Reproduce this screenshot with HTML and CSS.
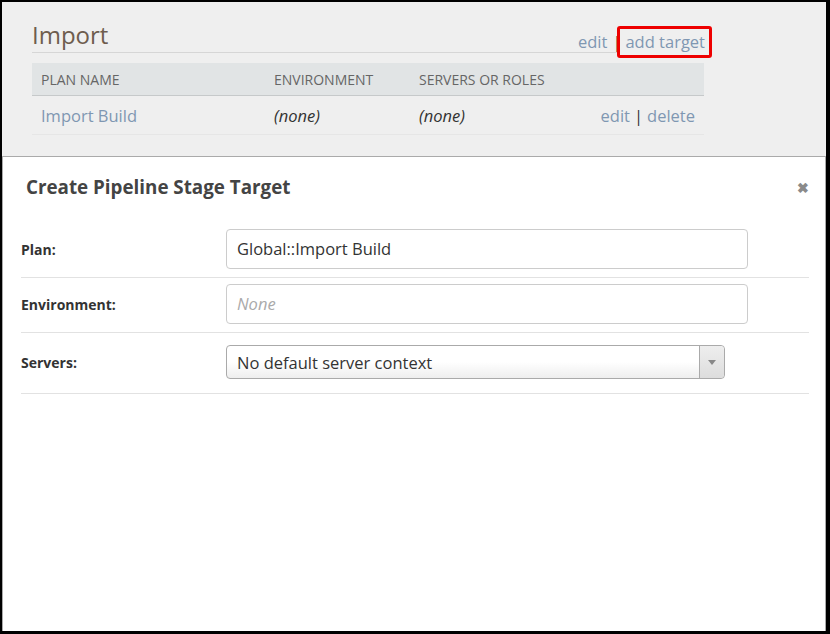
FILE: index.html
```html
<!DOCTYPE html>
<html>
<head>
<meta charset="utf-8">
<link rel="stylesheet" href="styles.css">
</head>
<body>
<div class="frame">
  <section class="stage">
    <div class="stage-head">
      <h2 class="stage-title">Import</h2>
      <div class="stage-actions">
        <a class="lnk">edit</a><span class="sep">|</span><a class="lnk add-target">add target</a>
      </div>
    </div>
    <table class="targets">
      <thead>
        <tr><th class="c1">Plan Name</th><th class="c2">Environment</th><th class="c3">Servers or Roles</th><th class="c4"></th></tr>
      </thead>
      <tbody>
        <tr>
          <td class="c1"><a class="lnk">Import Build</a></td>
          <td class="c2"><em>(none)</em></td>
          <td class="c3"><em>(none)</em></td>
          <td class="c4"><a class="lnk">edit</a><span class="bar">|</span><a class="lnk">delete</a></td>
        </tr>
      </tbody>
    </table>
  </section>
  <div class="modal">
    <div class="modal-head">
      <h3 class="modal-title">Create Pipeline Stage Target</h3>
      <span class="close">&#x2716;</span>
    </div>
    <div class="form">
      <div class="row">
        <label class="lbl">Plan:</label>
        <div class="input">Global::Import Build</div>
      </div>
      <div class="row">
        <label class="lbl">Environment:</label>
        <div class="input placeholder">None</div>
      </div>
      <div class="row row-select">
        <label class="lbl">Servers:</label>
        <div class="select">
          <span class="select-text">No default server context</span>
          <span class="select-arrow"><svg width="8" height="5" viewBox="0 0 8 5"><path d="M0 0h8L4 5z" fill="#888"/></svg></span>
        </div>
      </div>
    </div>
  </div>
</div>
</body>
</html>
```
FILE: styles.css
```css
html, body { margin: 0; padding: 0; }
body {
  font-family: "Open Sans", "Noto Sans", sans-serif;
  color: #333;
}
.frame {
  width: 830px;
  height: 634px;
  box-sizing: border-box;
  border-style: solid;
  border-color: #000;
  border-width: 2px 4px 3px 2px;
  background: #efefef;
  display: flex;
  flex-direction: column;
  overflow: hidden;
}
.stage {
  padding: 18px 0 0 30px;
  width: 672px;
  height: 136px;
}
.stage-head {
  display: flex;
  justify-content: space-between;
  align-items: flex-end;
  border-bottom: 1px solid #d6d6d6;
  width: 588px;
  height: 32px;
  overflow: visible;
}
.stage-title {
  margin: 0 0 2px;
  font-weight: 400;
  font-size: 24px;
  line-height: 30px;
  color: #6e5d4e;
}
.stage-actions {
  font-size: 16.5px;
  line-height: 22px;
  color: #7f97b2;
  white-space: nowrap;
  display: flex;
  align-items: center;
  margin-right: -85px;
  margin-bottom: -1px;
}
.lnk { color: #7f97b2; text-decoration: none; }
.sep { color: #333; margin: 0 4px 0 5px; }
.add-target {
  position: relative;
}
.add-target::after {
  content: "";
  position: absolute;
  left: -8px; right: -7px; top: -5px; bottom: -5px;
  border: 3px solid #ee0000;
  border-radius: 3px;
}
.targets {
  margin-top: 10px;
  width: 672px;
  border-collapse: collapse;
}
.targets th {
  background: #e1e4e5;
  text-align: left;
  font-weight: 400;
  text-transform: uppercase;
  font-size: 14px;
  color: #666;
  height: 32px;
  padding: 0 0 0 9px;
  border-bottom: 1px solid #c6c9ca;
}
.targets td {
  height: 37px;
  padding: 1px 0 0 9px;
  font-size: 16.5px;
  border-bottom: 1px solid #e6e6e6;
}
.targets em { color: #333; font-size: 16.5px; }
.c1 { width: 224px; }
.c2 { width: 136px; }
.c3 { width: 160px; }
.targets td.c4 { text-align: right; padding-right: 9px; white-space: nowrap; }
.bar { color: #333; margin: 0 4px; }
.modal {
  flex: 1;
  background: #fff;
  border: 1px solid #aaa;
  border-bottom: 0;
}
.modal-head {
  display: flex;
  justify-content: space-between;
  align-items: center;
  padding: 16px 16px 0 23px;
  height: 28px;
}
.modal-title {
  margin: 0;
  font-size: 18.8px;
  font-weight: 700;
  color: #444;
}
.close {
  color: #8a8a8a;
  font-size: 14px;
  font-weight: 700;
}
.form {
  margin: 28px 16px 0 18px;
}
.row {
  display: flex;
  align-items: center;
  padding: 0 0 8px;
  border-bottom: 1px solid #e2e2e2;
  margin-bottom: 6px;
}
.lbl {
  width: 205px;
  font-size: 14px;
  font-weight: 700;
  color: #333;
}
.input {
  width: 522px;
  height: 40px;
  box-sizing: border-box;
  border: 1px solid #ccc;
  border-radius: 4px;
  padding: 0 10px;
  font-size: 16.5px;
  line-height: 38px;
  color: #333;
}
.input.placeholder { font-style: italic; color: #aaa; }
.row-select { padding: 6px 0 14px; }
.select {
  width: 499px;
  height: 34px;
  box-sizing: border-box;
  border: 1px solid #aaa;
  border-radius: 4px;
  background: linear-gradient(#fff 50%, #eee);
  display: flex;
  align-items: center;
}
.select-text {
  flex: 1;
  padding-left: 10px;
  font-size: 16.5px;
  color: #333;
}
.select-arrow {
  width: 24px;
  height: 100%;
  border-left: 1px solid #aaa;
  background: linear-gradient(#eee, #ddd);
  display: flex;
  align-items: center;
  justify-content: center;
  border-radius: 0 4px 4px 0;
}
```
